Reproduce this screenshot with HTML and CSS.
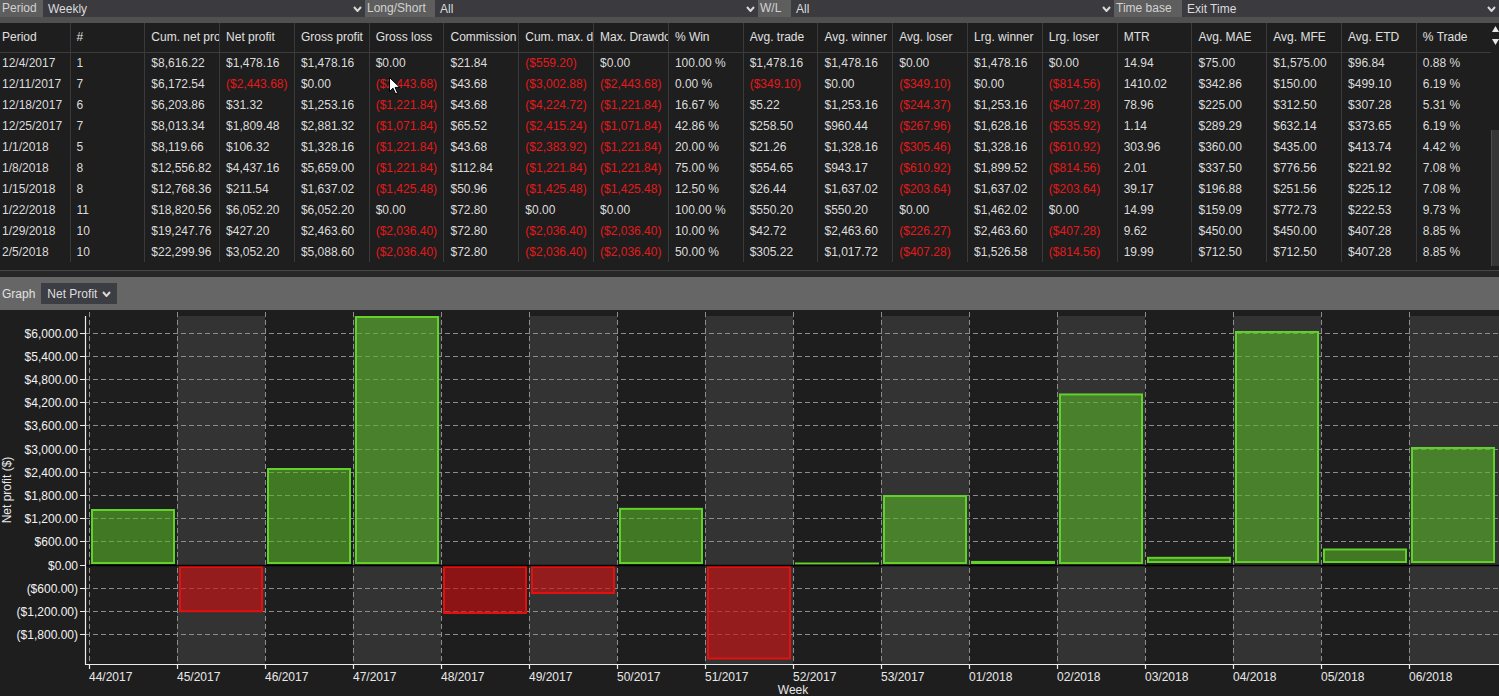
FILE: index.html
```html
<!DOCTYPE html>
<html lang="en">
<head>
  <meta charset="UTF-8" />
  <title>Performance - Weekly</title>
  <link rel="stylesheet" href="styles.css">
</head>
<body>
  <!-- Filter bar -->
  <div class="filters">
    <span class="flabel w-period">Period</span>
    <div class="fselect w-sel">Weekly <svg class="chev" width="9" height="6"><polyline points="1,1 4.5,5 8,1"/></svg></div>
    <span class="flabel w-ls">Long/Short</span>
    <div class="fselect w-sel2">All <svg class="chev" width="9" height="6"><polyline points="1,1 4.5,5 8,1"/></svg></div>
    <span class="flabel w-wl">W/L</span>
    <div class="fselect w-sel2">All <svg class="chev" width="9" height="6"><polyline points="1,1 4.5,5 8,1"/></svg></div>
    <span class="flabel w-tb">Time base</span>
    <div class="fselect grow">Exit Time <svg class="chev" width="9" height="6"><polyline points="1,1 4.5,5 8,1"/></svg></div>
  </div>

  <!-- Performance grid -->
  <div class="grid">
    <table class="perf">
      <colgroup>
        <col class="c-first">
        <col><col><col><col><col><col><col><col><col>
        <col><col><col><col><col><col><col><col><col>
        <col class="c-last">
      </colgroup>
      <thead>
        <tr>
          <th>Period</th><th>#</th><th>Cum. net profit</th><th>Net profit</th><th>Gross profit</th>
          <th>Gross loss</th><th>Commission</th><th>Cum. max. drawdown</th><th>Max. Drawdown</th><th>% Win</th>
          <th>Avg. trade</th><th>Avg. winner</th><th>Avg. loser</th><th>Lrg. winner</th><th>Lrg. loser</th>
          <th>MTR</th><th>Avg. MAE</th><th>Avg. MFE</th><th>Avg. ETD</th><th>% Trade</th>
        </tr>
      </thead>
      <tbody>
        <tr><td>12/4/2017</td><td>1</td><td>$8,616.22</td><td>$1,478.16</td><td>$1,478.16</td><td>$0.00</td><td>$21.84</td><td class="neg">($559.20)</td><td>$0.00</td><td>100.00 %</td><td>$1,478.16</td><td>$1,478.16</td><td>$0.00</td><td>$1,478.16</td><td>$0.00</td><td>14.94</td><td>$75.00</td><td>$1,575.00</td><td>$96.84</td><td>0.88 %</td></tr>
        <tr><td>12/11/2017</td><td>7</td><td>$6,172.54</td><td class="neg">($2,443.68)</td><td>$0.00</td><td class="neg">($2,443.68)</td><td>$43.68</td><td class="neg">($3,002.88)</td><td class="neg">($2,443.68)</td><td>0.00 %</td><td class="neg">($349.10)</td><td>$0.00</td><td class="neg">($349.10)</td><td>$0.00</td><td class="neg">($814.56)</td><td>1410.02</td><td>$342.86</td><td>$150.00</td><td>$499.10</td><td>6.19 %</td></tr>
        <tr><td>12/18/2017</td><td>6</td><td>$6,203.86</td><td>$31.32</td><td>$1,253.16</td><td class="neg">($1,221.84)</td><td>$43.68</td><td class="neg">($4,224.72)</td><td class="neg">($1,221.84)</td><td>16.67 %</td><td>$5.22</td><td>$1,253.16</td><td class="neg">($244.37)</td><td>$1,253.16</td><td class="neg">($407.28)</td><td>78.96</td><td>$225.00</td><td>$312.50</td><td>$307.28</td><td>5.31 %</td></tr>
        <tr><td>12/25/2017</td><td>7</td><td>$8,013.34</td><td>$1,809.48</td><td>$2,881.32</td><td class="neg">($1,071.84)</td><td>$65.52</td><td class="neg">($2,415.24)</td><td class="neg">($1,071.84)</td><td>42.86 %</td><td>$258.50</td><td>$960.44</td><td class="neg">($267.96)</td><td>$1,628.16</td><td class="neg">($535.92)</td><td>1.14</td><td>$289.29</td><td>$632.14</td><td>$373.65</td><td>6.19 %</td></tr>
        <tr><td>1/1/2018</td><td>5</td><td>$8,119.66</td><td>$106.32</td><td>$1,328.16</td><td class="neg">($1,221.84)</td><td>$43.68</td><td class="neg">($2,383.92)</td><td class="neg">($1,221.84)</td><td>20.00 %</td><td>$21.26</td><td>$1,328.16</td><td class="neg">($305.46)</td><td>$1,328.16</td><td class="neg">($610.92)</td><td>303.96</td><td>$360.00</td><td>$435.00</td><td>$413.74</td><td>4.42 %</td></tr>
        <tr><td>1/8/2018</td><td>8</td><td>$12,556.82</td><td>$4,437.16</td><td>$5,659.00</td><td class="neg">($1,221.84)</td><td>$112.84</td><td class="neg">($1,221.84)</td><td class="neg">($1,221.84)</td><td>75.00 %</td><td>$554.65</td><td>$943.17</td><td class="neg">($610.92)</td><td>$1,899.52</td><td class="neg">($814.56)</td><td>2.01</td><td>$337.50</td><td>$776.56</td><td>$221.92</td><td>7.08 %</td></tr>
        <tr><td>1/15/2018</td><td>8</td><td>$12,768.36</td><td>$211.54</td><td>$1,637.02</td><td class="neg">($1,425.48)</td><td>$50.96</td><td class="neg">($1,425.48)</td><td class="neg">($1,425.48)</td><td>12.50 %</td><td>$26.44</td><td>$1,637.02</td><td class="neg">($203.64)</td><td>$1,637.02</td><td class="neg">($203.64)</td><td>39.17</td><td>$196.88</td><td>$251.56</td><td>$225.12</td><td>7.08 %</td></tr>
        <tr><td>1/22/2018</td><td>11</td><td>$18,820.56</td><td>$6,052.20</td><td>$6,052.20</td><td>$0.00</td><td>$72.80</td><td>$0.00</td><td>$0.00</td><td>100.00 %</td><td>$550.20</td><td>$550.20</td><td>$0.00</td><td>$1,462.02</td><td>$0.00</td><td>14.99</td><td>$159.09</td><td>$772.73</td><td>$222.53</td><td>9.73 %</td></tr>
        <tr><td>1/29/2018</td><td>10</td><td>$19,247.76</td><td>$427.20</td><td>$2,463.60</td><td class="neg">($2,036.40)</td><td>$72.80</td><td class="neg">($2,036.40)</td><td class="neg">($2,036.40)</td><td>10.00 %</td><td>$42.72</td><td>$2,463.60</td><td class="neg">($226.27)</td><td>$2,463.60</td><td class="neg">($407.28)</td><td>9.62</td><td>$450.00</td><td>$450.00</td><td>$407.28</td><td>8.85 %</td></tr>
        <tr><td>2/5/2018</td><td>10</td><td>$22,299.96</td><td>$3,052.20</td><td>$5,088.60</td><td class="neg">($2,036.40)</td><td>$72.80</td><td class="neg">($2,036.40)</td><td class="neg">($2,036.40)</td><td>50.00 %</td><td>$305.22</td><td>$1,017.72</td><td class="neg">($407.28)</td><td>$1,526.58</td><td class="neg">($814.56)</td><td>19.99</td><td>$712.50</td><td>$712.50</td><td>$407.28</td><td>8.85 %</td></tr>
      </tbody>
    </table>
    <div class="vscroll">
      <svg class="arrows" width="7" height="19"><polygon points="3.5,0 7,6 0,6"/><polygon points="0,13 7,13 3.5,19"/></svg>
      <div class="thumb"></div>
    </div>
  </div>
  <div class="grid-foot"></div>

  <!-- Graph toolbar -->
  <div class="graph-bar">
    <span class="glabel">Graph</span>
    <div class="gselect">Net Profit <svg class="chev" width="9" height="6"><polyline points="1,1 4.5,5 8,1"/></svg></div>
  </div>

  <!-- Net profit chart -->
  <svg class="chart" width="1499" height="386" viewBox="0 0 1499 386">
    <g class="bands">
      <rect x="177" y="6" width="88" height="348"/>
      <rect x="353" y="6" width="88" height="348"/>
      <rect x="529" y="6" width="88" height="348"/>
      <rect x="705" y="6" width="88" height="348"/>
      <rect x="881" y="6" width="88" height="348"/>
      <rect x="1057" y="6" width="88" height="348"/>
      <rect x="1233" y="6" width="88" height="348"/>
      <rect x="1409" y="6" width="90" height="348"/>
    </g>
    <path class="gridline" d="M85 23.5H1499M85 46.5H1499M85 69.5H1499M85 92.5H1499M85 115.5H1499M85 139.5H1499M85 162.5H1499M85 185.5H1499M85 208.5H1499M85 231.5H1499M85 278.5H1499M85 301.5H1499M85 324.5H1499"/>
    <path class="gridline" d="M89.5 2V354M177.5 2V354M265.5 2V354M353.5 2V354M441.5 2V354M529.5 2V354M617.5 2V354M705.5 2V354M793.5 2V354M881.5 2V354M969.5 2V354M1057.5 2V354M1145.5 2V354M1233.5 2V354M1321.5 2V354M1409.5 2V354"/>

    <g class="up">
      <rect x="92" y="200" width="82" height="53"/>
      <rect x="268" y="159" width="82" height="94"/>
      <rect x="356" y="7" width="82" height="246"/>
      <rect x="620" y="198.85" width="82" height="54.15"/>
      <line x1="795" y1="253.5" x2="879" y2="253.5"/>
      <rect x="884" y="186.03" width="82" height="66.97"/>
      <rect x="972" y="251.9" width="82" height="1.1"/>
      <rect x="1060" y="84.43" width="82" height="168.57"/>
      <rect x="1148" y="247.82" width="82" height="4.18"/>
      <rect x="1236" y="21.98" width="82" height="230.02"/>
      <rect x="1324" y="239.48" width="82" height="12.52"/>
      <rect x="1412" y="137.98" width="82" height="114.02"/>
    </g>
    <g class="down">
      <rect x="180" y="257" width="82" height="44.24"/>
      <rect x="444" y="257" width="82" height="46"/>
      <rect x="532" y="257" width="82" height="26"/>
      <rect x="708" y="257" width="82" height="91.5"/>
    </g>

    <path class="zero" d="M85 255.5H1499"/>
    <path class="axis" d="M85.5 6V355M85 354.5H1499"/>
    <path class="tick" d="M80 23.5H85M80 46.5H85M80 69.5H85M80 92.5H85M80 115.5H85M80 139.5H85M80 162.5H85M80 185.5H85M80 208.5H85M80 231.5H85M80 255.5H85M80 278.5H85M80 301.5H85M80 324.5H85"/>
    <path class="tick" d="M89.5 354V359M177.5 354V359M265.5 354V359M353.5 354V359M441.5 354V359M529.5 354V359M617.5 354V359M705.5 354V359M793.5 354V359M881.5 354V359M969.5 354V359M1057.5 354V359M1145.5 354V359M1233.5 354V359M1321.5 354V359M1409.5 354V359"/>

    <g class="ylab">
      <text x="78" y="27.5">$6,000.00</text>
      <text x="78" y="50.5">$5,400.00</text>
      <text x="78" y="73.5">$4,800.00</text>
      <text x="78" y="96.5">$4,200.00</text>
      <text x="78" y="119.5">$3,600.00</text>
      <text x="78" y="143.5">$3,000.00</text>
      <text x="78" y="166.5">$2,400.00</text>
      <text x="78" y="189.5">$1,800.00</text>
      <text x="78" y="212.5">$1,200.00</text>
      <text x="78" y="235.5">$600.00</text>
      <text x="78" y="259.5">$0.00</text>
      <text x="78" y="282.5">($600.00)</text>
      <text x="78" y="305.5">($1,200.00)</text>
      <text x="78" y="328.5">($1,800.00)</text>
    </g>
    <g class="xlab">
      <text x="89" y="370.5">44/2017</text>
      <text x="177" y="370.5">45/2017</text>
      <text x="265" y="370.5">46/2017</text>
      <text x="353" y="370.5">47/2017</text>
      <text x="441" y="370.5">48/2017</text>
      <text x="529" y="370.5">49/2017</text>
      <text x="617" y="370.5">50/2017</text>
      <text x="705" y="370.5">51/2017</text>
      <text x="793" y="370.5">52/2017</text>
      <text x="881" y="370.5">53/2017</text>
      <text x="969" y="370.5">01/2018</text>
      <text x="1057" y="370.5">02/2018</text>
      <text x="1145" y="370.5">03/2018</text>
      <text x="1233" y="370.5">04/2018</text>
      <text x="1321" y="370.5">05/2018</text>
      <text x="1409" y="370.5">06/2018</text>
    </g>
    <text class="title-x" x="793" y="383.5">Week</text>
    <text class="title-y" transform="translate(10.5,180) rotate(-90)">Net profit ($)</text>
  </svg>

  <!-- mouse pointer from the capture -->
  <svg class="cursor" width="12" height="18" viewBox="0 0 12 18"><path d="M0.5 0.5V14.5L4 11.2L6.6 17L8.6 16.1L6.1 10.4H10.8Z"/></svg>
</body>
</html>
```

FILE: styles.css
```css
* {
  box-sizing: border-box;
}

body {
  margin: 0;
  width: 1499px;
  height: 696px;
  overflow: hidden;
  position: relative;
  background: #1e1e1e;
  color: #dcdcdc;
  font-family: "Liberation Sans", Arial, sans-serif;
  font-size: 12px;
}

/* filter bar */
.filters {
  display: flex;
  height: 23px;
  padding-bottom: 6px;
  background: #505050;
}

.flabel {
  background: #5e5e5e;
  color: #d2d2d2;
  padding-left: 2px;
  line-height: 17px;
  white-space: nowrap;
}

.w-period { width: 43px; }
.w-ls { width: 70px; }
.w-wl { width: 33px; }
.w-tb { width: 68px; }

.fselect {
  display: flex;
  align-items: center;
  justify-content: space-between;
  background: #3a3a3f;
  color: #dcdcdc;
  padding: 0 3px 0 5px;
  height: 17px;
}

.w-sel { width: 322px; }
.w-sel2 { width: 323px; }
.grow { flex: 1; }

.chev polyline {
  fill: none;
  stroke: #d8d8d8;
  stroke-width: 2;
}

/* performance grid */
.grid {
  display: flex;
  height: 248px;
  border-bottom: 1px solid #474747;
  background: #1e1e1e;
}

.perf {
  width: 1491px;
  table-layout: fixed;
  border-collapse: collapse;
  align-self: flex-start;
}

.perf col { width: 74.8px; }
.perf col.c-first { width: 70px; }
.perf col.c-last { width: 74.6px; }

.perf th,
.perf td {
  padding: 0 3px 0 6px;
  white-space: nowrap;
  overflow: hidden;
  text-overflow: clip;
  text-align: left;
  font-weight: normal;
  border-right: 1px solid #3a3a3a;
}

.perf th:first-child,
.perf td:first-child {
  padding-left: 2px;
}

.perf th:last-child,
.perf td:last-child {
  border-right: none;
}

.perf th {
  height: 29px;
  color: #e0e0e0;
  border-bottom: 1px solid #3c3c3c;
}

.perf td {
  height: 21px;
  color: #dcdcdc;
}

.perf td.neg {
  color: #e3191b;
}

.vscroll {
  width: 8px;
  display: flex;
  flex-direction: column;
  align-items: center;
  background: #1e1e1e;
}

.arrows {
  margin-top: 3px;
  fill: #e6e6e6;
}

.thumb {
  margin-top: 85px;
  width: 8px;
  height: 136px;
  background: #353535;
  border-left: 1px solid #4c4c4c;
}

.grid-foot {
  height: 6px;
  background: #272727;
}

/* graph toolbar */
.graph-bar {
  display: flex;
  align-items: center;
  height: 33px;
  background: #666666;
}

.glabel {
  padding-left: 2px;
  color: #e2e2e2;
}

.gselect {
  display: flex;
  align-items: center;
  justify-content: space-between;
  margin-left: 6px;
  width: 76px;
  height: 21px;
  padding: 0 6px 0 6px;
  background: #3d3d44;
  color: #dedede;
}

/* chart */
.chart {
  display: block;
}

.bands rect {
  fill: #333333;
}

.gridline {
  fill: none;
  stroke: #8c8c8c;
  stroke-width: 1;
  stroke-dasharray: 5 3;
}

.up rect,
.up line {
  fill: rgba(88, 180, 40, 0.6);
  stroke: #62d12a;
  stroke-width: 2;
}

.down rect {
  fill: rgba(210, 15, 15, 0.62);
  stroke: #e31010;
  stroke-width: 2;
}

.zero {
  stroke: #000;
  stroke-width: 1.5;
}

.axis,
.tick {
  fill: none;
  stroke: #ececec;
  stroke-width: 1.2;
}

.ylab text {
  fill: #f2f2f2;
  text-anchor: end;
  font-size: 12px;
  font-family: "Liberation Sans", Arial, sans-serif;
}

.xlab text,
.title-x,
.title-y {
  fill: #e8e8e8;
  font-size: 12px;
  font-family: "Liberation Sans", Arial, sans-serif;
}

.title-x,
.title-y {
  text-anchor: middle;
}

.cursor {
  position: absolute;
  left: 389px;
  top: 77px;
}

.cursor path {
  fill: #ffffff;
  stroke: #000000;
  stroke-width: 1;
}
```
